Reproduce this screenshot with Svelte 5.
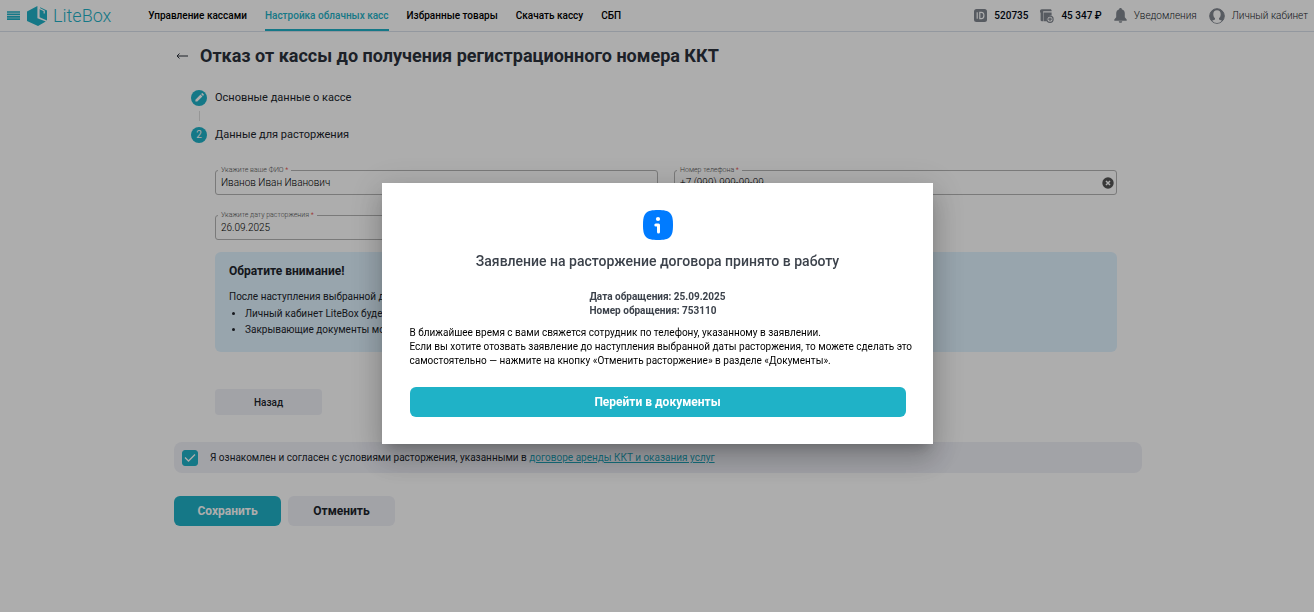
<script>
  let fullName = "Иванов Иван Иванович";
  let phone = "+7 (999) 999-99-99";
  let date = "26.09.2025";
  let agreed = true;
  let dialogOpen = true;

  const navItems = [
    { title: "Управление кассами" },
    { title: "Настройка облачных касс", active: true },
    { title: "Избранные товары" },
    { title: "Скачать кассу" },
    { title: "СБП" },
  ];

  const clearPhone = () => {
    phone = "";
  };

  const closeDialog = () => {
    dialogOpen = false;
  };
</script>

<div class="page">
  <header class="header">
    <button class="icon-button burger" aria-label="Меню">
      <svg width="13" height="9" viewBox="0 0 13 9">
        <path d="M0 1h13M0 3.4h13M0 5.8h13M0 8.2h13" stroke="#1fb2c7" stroke-width="1.7" />
      </svg>
    </button>
    <a class="logo" href="/">
      <svg width="20" height="20" viewBox="0 0 20 20">
        <path d="M0 5.4 10.4 0v12.2l8.4 3.2L11 20 0 15z" fill="#1fb2c7" />
        <path d="M12.6 1 20 4.600v9.800l-7.400-3.200z" fill="#1fb2c7" />
        <path d="M12.600 1v1.600l4.600 2.200v2.600" fill="none" stroke="#fff" stroke-width="1.200" />
      </svg>
      <span>LiteBox</span>
    </a>
    <nav class="nav">
      {#each navItems as item}
        <a href="/" class:active={item.active}>{item.title}</a>
      {/each}
    </nav>
    <div class="account">
      <span class="account-item">
        <svg width="13" height="13" viewBox="0 0 13 13">
          <rect width="13" height="13" rx="2.5" fill="#80868f" />
          <path d="M3.2 3.3v6.4M5.8 3.3v6.4h1.6c1.6 0 2.5-1.2 2.5-3.2S9 3.3 7.4 3.3z" fill="none" stroke="#fff" stroke-width="1.2" />
        </svg>
        <b>520735</b>
      </span>
      <span class="account-item">
        <svg width="14" height="14" viewBox="0 0 14 14">
          <path d="M0 2.2C0 1 .7.2 1.8.2h8.4c1 0 1.4.6 1.4 1.4v.7H3.2v9.9H1.8c-1 0-1.2-.7-1.2-1.4V4C.2 3.6 0 3 0 2.2z" fill="#80868f" />
          <path d="M3.6 3.4h8v3.2a4 4 0 0 0-4.5 5.6H3.6z" fill="#80868f" />
          <circle cx="10" cy="10.2" r="3.1" fill="#fff" stroke="#80868f" stroke-width="1.2" />
          <path d="M10 8.4V12M8.2 10.2h3.6" stroke="#80868f" stroke-width="1.2" />
        </svg>
        <b>45 347 ₽</b>
      </span>
      <a class="account-item" href="/">
        <svg width="13" height="15" viewBox="0 0 13 15">
          <path d="M6.5 0c.8 0 1.3.5 1.3 1.2 2 .6 3 2.2 3 4.3v3.7l1.9 2.2v1.3H.3v-1.3l1.9-2.2V5.5c0-2.1 1-3.7 3-4.3C5.2.5 5.7 0 6.5 0z" fill="#80868f" />
          <path d="M4.8 13.2h3.4c0 1-.7 1.6-1.7 1.6s-1.7-.6-1.7-1.6z" fill="#80868f" />
        </svg>
        Уведомления
      </a>
      <a class="account-item" href="/">
        <svg width="16" height="16" viewBox="0 0 16 16">
          <circle cx="8" cy="8" r="7.3" fill="#80868f" stroke="#80868f" />
          <path d="M8 2.2c2.4 0 3.7 1.6 3.7 4 0 1.8-.7 3.2-1.7 4v1.2l3 1.3A7 7 0 0 1 8 15a7 7 0 0 1-5-2.3l3-1.3v-1.2c-1-.8-1.7-2.2-1.7-4 0-2.4 1.3-4 3.7-4z" fill="#fff" />
        </svg>
        Личный кабинет
      </a>
    </div>
  </header>

  <main class="content">
    <div class="title">
      <button class="icon-button" aria-label="Вернуться">
        <svg width="12" height="8" viewBox="0 0 12 8">
          <path d="M12 4H1M3.5 1.5 1 4l2.5 2.5" fill="none" stroke="#2b313b" />
        </svg>
      </button>
      <h1>Отказ от кассы до получения регистрационного номера ККТ</h1>
    </div>

    <ol class="steps">
      <li>
        <span class="step-mark">
          <svg width="11" height="11" viewBox="0 0 11 11">
            <path d="M1.400 9.600V7.700L6.500 2.600l1.900 1.900-5.100 5.100zM7.100 2l.8-.8c.2-.2.5-.2.700 0l1.200 1.200c.2.200.2.500 0 .7l-.8.800z" fill="#fff" />
          </svg>
        </span>
        Основные данные о кассе
      </li>
      <li>
        <span class="step-mark">2</span>
        Данные для расторжения
      </li>
    </ol>

    <div class="step-body">
      <div class="fields">
        <fieldset>
          <legend><label for="full-name">Укажите ваше ФИО <i>*</i></label></legend>
          <input id="full-name" type="text" bind:value={fullName} />
        </fieldset>
        <fieldset>
          <legend><label for="phone">Номер телефона <i>*</i></label></legend>
          <input id="phone" type="tel" bind:value={phone} />
          <button class="icon-button" aria-label="Очистить" on:click={clearPhone}>
            <svg width="12" height="12" viewBox="0 0 12 12">
              <circle cx="6" cy="6" r="5.7" fill="#555" />
              <path d="m4 4 4 4M8 4 4 8" stroke="#fff" stroke-width="1.5" />
            </svg>
          </button>
        </fieldset>
        <fieldset>
          <legend><label for="date">Укажите дату расторжения <i>*</i></label></legend>
          <input id="date" type="text" bind:value={date} />
        </fieldset>
      </div>

      <section class="notice">
        <h2>Обратите внимание!</h2>
        <p>После наступления выбранной даты</p>
        <ul>
          <li>Личный кабинет LiteBox будет</li>
          <li>Закрывающие документы можно</li>
        </ul>
      </section>

      <button class="button back">Назад</button>
    </div>

    <div class="agreement">
      <input id="agreement" type="checkbox" bind:checked={agreed} />
      <label for="agreement">
        Я ознакомлен и согласен с условиями расторжения, указанными в
        <a href="/">договоре аренды ККТ и оказания услуг</a>
      </label>
    </div>

    <div class="actions">
      <button class="button primary">Сохранить</button>
      <button class="button">Отменить</button>
    </div>
  </main>
</div>

{#if dialogOpen}
  <div class="overlay">
    <div class="dialog" role="dialog" aria-modal="true" aria-labelledby="dialog-title">
      <svg width="30" height="30" viewBox="0 0 30 30">
        <path d="M15 0C27 0 30 3 30 15S27 30 15 30 0 27 0 15 3 0 15 0z" fill="#007bff" />
        <circle cx="15" cy="9" r="2.1" fill="#fff" />
        <path d="M12.8 15h2.7v7" fill="none" stroke="#fff" stroke-width="3" stroke-linecap="round" stroke-linejoin="round" />
      </svg>
      <h2 id="dialog-title">Заявление на расторжение договора принято в работу</h2>
      <div class="request">
        <div>Дата обращения: 25.09.2025</div>
        <div>Номер обращения: 753110</div>
      </div>
      <p>
        В ближайшее время с вами свяжется сотрудник по телефону, указанному в заявлении.<br />
        Если вы хотите отозвать заявление до наступления выбранной даты расторжения, то можете сделать это
        самостоятельно — нажмите на кнопку «Отменить расторжение» в разделе «Документы».
      </p>
      <button class="button primary" on:click={closeDialog}>Перейти в документы</button>
    </div>
  </div>
{/if}

<style>
  :global(body) {
    font-family: Roboto, "Liberation Sans", sans-serif;
    font-size: 10px;
    color: #20242b;
    background: #fff;
  }

  * {
    box-sizing: border-box;
  }

  h1,
  h2,
  p,
  ul,
  ol {
    margin: 0;
    padding: 0;
  }

  svg {
    display: block;
    flex-shrink: 0;
  }

  a {
    color: inherit;
    text-decoration: none;
  }

  button,
  input {
    font-family: inherit;
    color: inherit;
  }

  .icon-button {
    padding: 0;
    border: none;
    background: none;
    cursor: pointer;
  }

  .header {
    display: flex;
    align-items: center;
    height: 32px;
    padding: 0 6px 0 7px;
    border-bottom: 1px solid #d9e0ea;
  }

  .logo {
    display: flex;
    align-items: center;
    gap: 6px;
    margin-left: 7px;
    font-size: 18px;
    font-weight: 300;
    color: #1fb2c7;
  }

  .nav {
    display: flex;
    align-self: stretch;
    gap: 18px;
    margin-left: 37px;
    font-size: 10px;
    font-weight: 500;
    line-height: 31px;
    color: #000;
  }

  .nav .active {
    color: #1fb2c7;
    box-shadow: inset 0 -2px #1fb2c7;
  }

  .account {
    display: flex;
    gap: 12px;
    margin-left: auto;
    font-size: 10px;
    font-weight: 300;
    white-space: nowrap;
  }

  .account-item {
    display: flex;
    align-items: center;
    gap: 7px;
  }

  .account b {
    font-weight: 500;
    color: #000814;
  }

  .content {
    max-width: 970px;
    margin: 0 auto;
    padding-left: 2px;
  }

  .title {
    display: flex;
    align-items: center;
    gap: 12px;
    padding: 12px 0 0 2px;
  }

  h1 {
    font-size: 18px;
    line-height: 24px;
    color: #2b313b;
  }

  .steps {
    display: flex;
    flex-direction: column;
    gap: 20px;
    padding: 21px 0 0 17px;
    list-style: none;
  }

  .steps li {
    position: relative;
    display: flex;
    align-items: center;
    gap: 8px;
    font-size: 11px;
    line-height: 17px;
  }

  .steps li + li::before {
    content: "";
    position: absolute;
    left: 8px;
    top: -15px;
    height: 10px;
    border-left: 1px solid #ddd;
  }

  .step-mark {
    display: flex;
    align-items: center;
    justify-content: center;
    width: 16px;
    height: 16px;
    border-radius: 50%;
    font-size: 10px;
    color: #fff;
    background: #1fb2c7;
  }

  .step-body {
    padding: 22px 25px 0 41px;
  }

  .fields {
    display: grid;
    grid-template-columns: 1fr 1fr;
    gap: 15px 16px;
  }

  fieldset {
    display: flex;
    align-items: center;
    min-width: 0;
    height: 30px;
    margin: 0;
    padding: 0 2px 4px 5px;
    border: 1px solid #b4b4b4;
    border-radius: 3px;
  }

  legend {
    margin-left: -3px;
    padding: 0 3px;
    font-size: 7px;
    font-weight: 300;
    line-height: 10px;
    color: #555;
  }

  legend i {
    font-style: normal;
    color: #e53935;
  }

  fieldset input {
    flex: 1;
    min-width: 0;
    padding: 0;
    border: none;
    outline: none;
    font-size: 10px;
    font-weight: 300;
    line-height: 14px;
    color: #000;
    background: none;
  }

  .notice {
    margin-top: 12px;
    padding: 11px 14px 14px;
    border-radius: 6px;
    font-size: 10px;
    line-height: 16px;
    background: #e0f3ff;
  }

  .notice h2 {
    margin-bottom: 8px;
    font-size: 12px;
  }

  .notice p {
    line-height: 19px;
  }

  .notice ul {
    padding-left: 16px;
  }

  .button {
    min-width: 107px;
    height: 30px;
    padding: 0 12px;
    border: none;
    border-radius: 6px;
    font-size: 12px;
    font-weight: 700;
    background: #eff0f7;
    cursor: pointer;
  }

  .button.primary {
    color: #fff;
    background: #1fb2c7;
  }

  .button.back {
    height: 26px;
    margin-top: 37px;
    border-radius: 4px;
    font-size: 10px;
    font-weight: 500;
  }

  .agreement {
    display: flex;
    align-items: center;
    gap: 12px;
    height: 31px;
    margin-top: 27px;
    padding: 0 8px;
    border-radius: 8px;
    background: #eff0f7;
  }

  .agreement input {
    appearance: none;
    width: 16px;
    height: 16px;
    margin: 0;
    border: 1px solid #1fb2c7;
    border-radius: 3px;
  }

  .agreement input:checked {
    background: #1fb2c7
      url("data:image/svg+xml,%3Csvg xmlns='http://www.w3.org/2000/svg' viewBox='0 0 16 16'%3E%3Cpath d='m3 7.5 3.5 3.5L13 4.5' fill='none' stroke='%23fff' stroke-width='1.3'/%3E%3C/svg%3E")
      center / 16px;
  }

  .agreement a {
    color: #1fa3b7;
    text-decoration: underline;
  }

  .actions {
    display: flex;
    gap: 7px;
    padding: 23px 0;
  }

  .overlay {
    position: fixed;
    inset: 0;
    display: flex;
    align-items: center;
    justify-content: center;
    padding-top: 15px;
    background: rgba(0, 0, 0, 0.32);
  }

  .dialog {
    display: flex;
    flex-direction: column;
    align-items: center;
    width: 100%;
    max-width: 551px;
    padding: 27px 27px 27px 28px;
    background: #fff;
    box-shadow:
      0 8px 11px -5px rgba(0, 0, 0, 0.2),
      0 17px 26px 2px rgba(0, 0, 0, 0.14),
      0 6px 32px 6px rgba(0, 0, 0, 0.12);
  }

  .dialog h2 {
    margin: 12px 0 20px;
    font-size: 14px;
    font-weight: 500;
    line-height: 18px;
    color: #3c424b;
  }

  .request {
    font-weight: 700;
    line-height: 14px;
    color: #3c424b;
  }

  .dialog p {
    align-self: stretch;
    margin: 8px -10px 19px 0;
    line-height: 14px;
    color: #000;
  }

  .dialog .button {
    align-self: stretch;
  }
</style>
